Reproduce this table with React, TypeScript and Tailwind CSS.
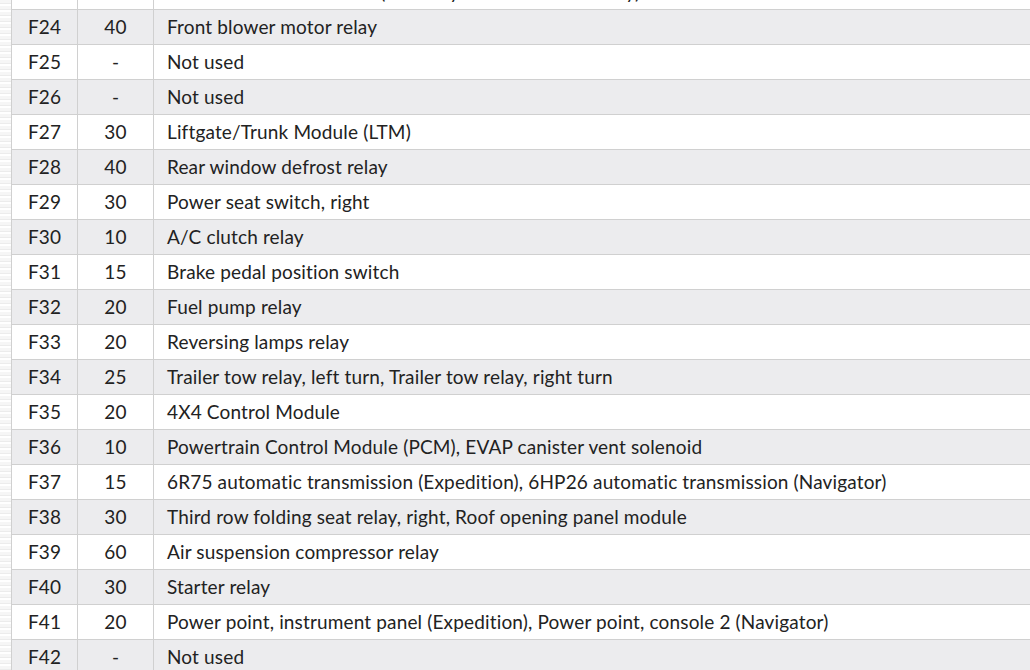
import React from 'react';

type Fuse = { id: string; amps: string; desc: string };

const fuses: Fuse[] = [
  { id: 'F23', amps: '30', desc: 'Trailer tow electric brake (Auxiliary climate control relay)' },
  { id: 'F24', amps: '40', desc: 'Front blower motor relay' },
  { id: 'F25', amps: '-', desc: 'Not used' },
  { id: 'F26', amps: '-', desc: 'Not used' },
  { id: 'F27', amps: '30', desc: 'Liftgate/Trunk Module (LTM)' },
  { id: 'F28', amps: '40', desc: 'Rear window defrost relay' },
  { id: 'F29', amps: '30', desc: 'Power seat switch, right' },
  { id: 'F30', amps: '10', desc: 'A/C clutch relay' },
  { id: 'F31', amps: '15', desc: 'Brake pedal position switch' },
  { id: 'F32', amps: '20', desc: 'Fuel pump relay' },
  { id: 'F33', amps: '20', desc: 'Reversing lamps relay' },
  { id: 'F34', amps: '25', desc: 'Trailer tow relay, left turn, Trailer tow relay, right turn' },
  { id: 'F35', amps: '20', desc: '4X4 Control Module' },
  { id: 'F36', amps: '10', desc: 'Powertrain Control Module (PCM), EVAP canister vent solenoid' },
  { id: 'F37', amps: '15', desc: '6R75 automatic transmission (Expedition), 6HP26 automatic transmission (Navigator)' },
  { id: 'F38', amps: '30', desc: 'Third row folding seat relay, right, Roof opening panel module' },
  { id: 'F39', amps: '60', desc: 'Air suspension compressor relay' },
  { id: 'F40', amps: '30', desc: 'Starter relay' },
  { id: 'F41', amps: '20', desc: 'Power point, instrument panel (Expedition), Power point, console 2 (Navigator)' },
  { id: 'F42', amps: '-', desc: 'Not used' },
];

export default function App() {
  return (
    <div
      className="flex h-[670px] w-[1030px] overflow-hidden bg-white text-[19px] tracking-[0.15px] text-[#222]"
      style={{ fontFamily: 'Lato, "Open Sans", sans-serif' }}
    >
      {/* scalloped page edge */}
      <div className="w-[11px] shrink-0 bg-[repeating-linear-gradient(180deg,#f6f6f6_0px,#f6f6f6_3px,#ececec_3px,#ececec_4px,#ffffff_4px,#ffffff_6px)]" />

      <div className="-mt-[25px] flex-1 border-l border-[#d0d0d0]">
        {fuses.map((f, i) => (
          <div
            key={f.id}
            className={`flex h-[35px] border-b border-[#d0d0d0] ${i % 2 === 1 ? 'bg-[#ececee]' : 'bg-white'}`}
          >
            <div className="flex w-[66px] shrink-0 items-center justify-center border-r border-[#d0d0d0]">
              {f.id}
            </div>
            <div className="flex w-[76px] shrink-0 items-center justify-center border-r border-[#d0d0d0]">
              {f.amps}
            </div>
            <div className="flex flex-1 items-center whitespace-nowrap pl-[13px]">{f.desc}</div>
          </div>
        ))}
      </div>
    </div>
  );
}
